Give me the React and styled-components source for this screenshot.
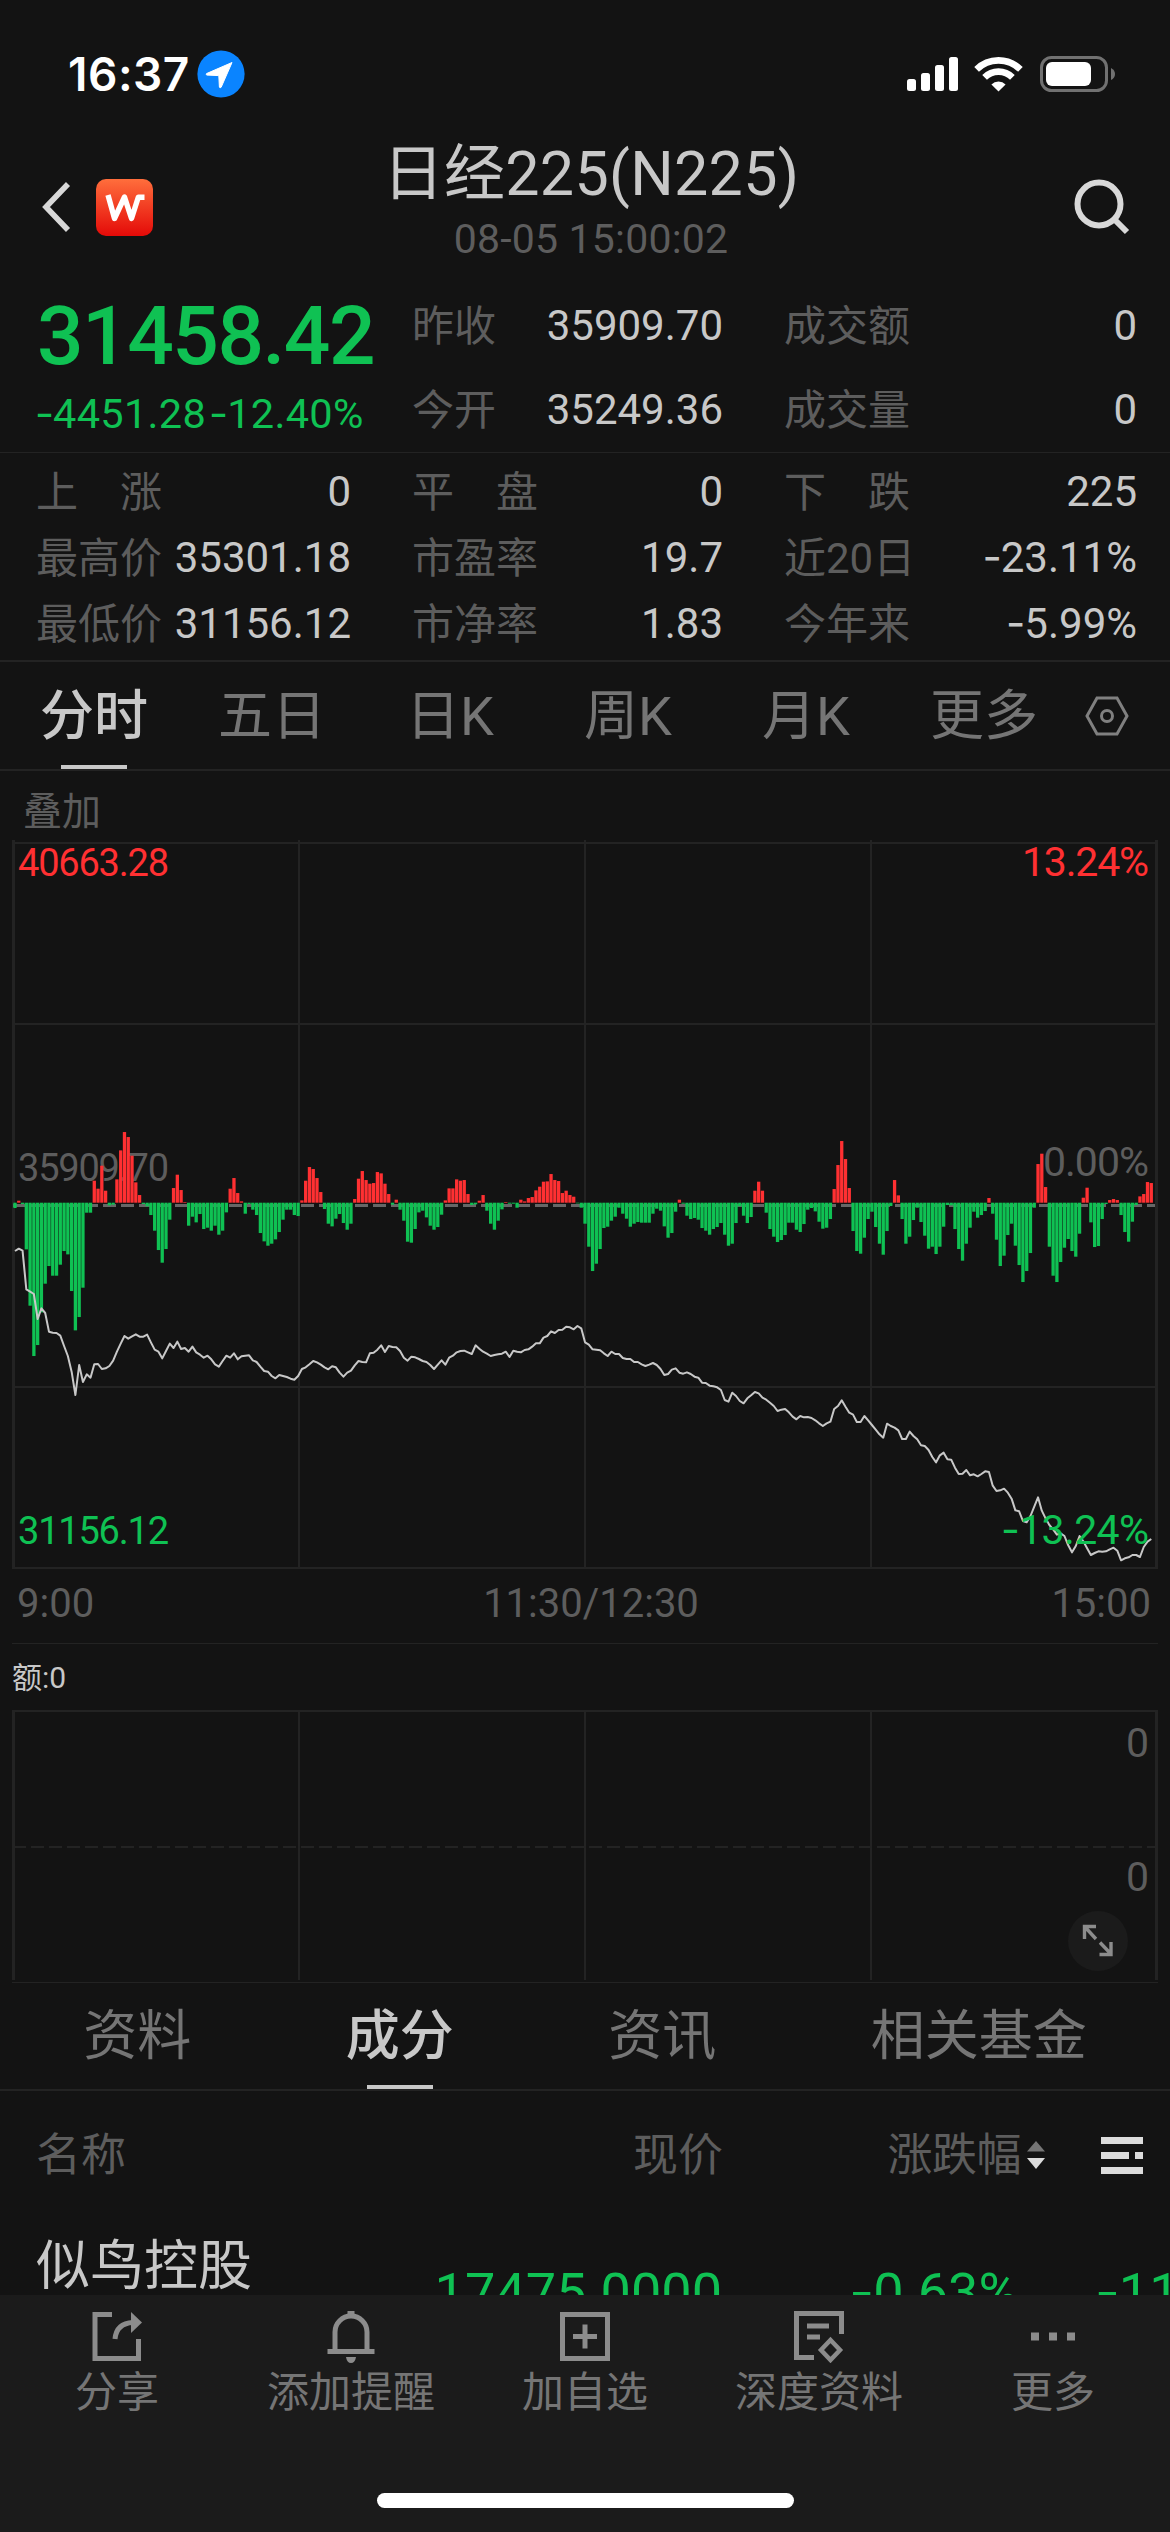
import React from 'react';
import styled, { createGlobalStyle } from 'styled-components';

const GlobalStyle = createGlobalStyle`
  body {
    margin: 0;
    background: #131313;
  }

  * {
    box-sizing: border-box;
  }

  svg {
    display: block;
  }
`;

const colors = {
  bg: '#131313',
  bar: '#1b1b1b',
  line: '#232323',
  text: '#c8c8c8',
  tab: '#757575',
  label: '#5d5d5d',
  up: '#ff3032',
  down: '#0fc153'
};

const fontStack = "Roboto, 'Noto Sans CJK SC', sans-serif";

const Screen = styled.div`
  width: 1170px;
  height: 2532px;
  display: flex;
  flex-direction: column;
  overflow: hidden;
  background: ${colors.bg};
  color: ${colors.text};
  font-family: ${fontStack};
  white-space: nowrap;
`;

// Inter has the wider minus
const Minus = styled.span`
  font-family: Inter, sans-serif;
  line-height: 1;
  letter-spacing: -1px;
`;

/* ---------- status bar ---------- */

const StatusBar = styled.div`
  flex: none;
  height: 140px;
  padding: 8px 55px 0 68px;
  display: flex;
  align-items: center;
  justify-content: space-between;
`;

const StatusGroup = styled.div`
  display: flex;
  align-items: center;
  gap: ${(props) => props.$gap}px;
`;

const Clock = styled.span`
  width: 121px;
  font-family: Inter, sans-serif;
  font-size: 46px;
  font-weight: 600;
  line-height: 56px;
  letter-spacing: 0.5px;
  color: #fff;
`;

/* ---------- header ---------- */

const Header = styled.div`
  flex: none;
  height: 134px;
  padding: 0 40px;
  display: grid;
  grid-template-columns: 200px 1fr 200px;
  align-items: center;
`;

const HeaderLeft = styled.div`
  display: flex;
  align-items: center;
  gap: 24px;
`;

const HeaderRight = styled.div`
  display: flex;
  justify-content: flex-end;
`;

const Heading = styled.div`
  align-self: start;
  padding: 1px 0 0 12px;
  display: flex;
  flex-direction: column;
  align-items: center;
  gap: 8px;
`;

const Title = styled.div`
  font-size: 61px;
  line-height: 66px;
  letter-spacing: 0.3px;
`;

const Timestamp = styled.div`
  font-size: 41px;
  line-height: 48px;
  letter-spacing: 0.2px;
  color: ${colors.label};
`;

/* ---------- quote ---------- */

const QuoteTop = styled.div`
  flex: none;
  height: 179px;
  padding: 9px 34px 0 36px;
  display: grid;
  grid-template-columns: 315px 311px 353px;
  column-gap: 61px;
  border-bottom: 1px solid ${colors.line};
`;

const PriceBlock = styled.div`
  padding-left: 1px;
  color: ${colors.down};
`;

const Price = styled.div`
  margin-top: 13px;
  font-size: 82px;
  font-weight: 500;
  line-height: 80px;
  letter-spacing: -1.5px;
`;

const Change = styled.div`
  margin: 17px 0 0 -2px;
  display: flex;
  gap: 3px;
  font-size: 41.5px;
  line-height: 40px;
  letter-spacing: 0.3px;
`;

const StatGrid = styled.div`
  flex: none;
  height: 209px;
  padding: 5px 34px 0 36px;
  display: grid;
  grid-template-columns: 315px 311px 353px;
  grid-auto-rows: 66px;
  column-gap: 61px;
  border-bottom: 2px solid ${colors.line};
`;

const Stat = styled.div`
  height: ${(props) => props.$height || 66}px;
  display: flex;
  align-items: center;
  justify-content: space-between;
  font-size: 42px;
`;

const StatLabel = styled.span`
  padding-bottom: 5px;
  color: ${colors.label};
`;

/* ---------- tabs ---------- */

const TabBar = styled.div`
  flex: none;
  height: ${(props) => props.$height}px;
  padding: ${(props) => props.$padding};
  display: flex;
  justify-content: ${(props) => (props.$spread ? 'space-around' : 'flex-start')};
  border-bottom: 2px solid ${colors.line};
`;

const Tab = styled.div`
  position: relative;
  width: ${(props) => (props.$width ? `${props.$width}px` : 'auto')};
  padding-bottom: 9px;
  display: flex;
  align-items: center;
  justify-content: center;
  font-size: 54px;
  font-weight: ${(props) => (props.$active ? 500 : 400)};
  color: ${(props) => (props.$active ? colors.text : colors.tab)};

  &::after {
    content: '';
    display: ${(props) => (props.$active ? 'block' : 'none')};
    position: absolute;
    left: 50%;
    bottom: 0;
    width: 66px;
    height: 4px;
    margin-left: -33px;
    background: ${colors.text};
  }
`;

const TabSettings = styled.div`
  padding-left: 12px;
  display: flex;
  align-items: center;
`;

/* ---------- charts ---------- */

const Overlay = styled.div`
  flex: none;
  height: 69px;
  padding: 5px 0 0 23px;
  display: flex;
  align-items: center;
  font-size: 39px;
  color: ${colors.label};
`;

const PriceChartSvg = styled.svg`
  flex: none;
  width: 1170px;
  height: 730px;
  font-family: ${fontStack};
`;

const TimeAxis = styled.div`
  flex: none;
  height: 74px;
  margin: 0 12px;
  padding: 0 7px 7px 5px;
  display: grid;
  grid-template-columns: 1fr auto 1fr;
  align-items: center;
  border-bottom: 1px solid ${colors.line};
  font-size: 40px;
  color: ${colors.label};
`;

const MiddayLabel = styled.span`
  padding-left: 14px;
`;

const CloseLabel = styled.span`
  justify-self: end;
`;

const VolumeTitle = styled.div`
  flex: none;
  height: 66px;
  padding: 0 0 4px 12px;
  display: flex;
  align-items: center;
  font-size: 30px;
`;

const VolumePane = styled.div`
  flex: none;
  position: relative;
  height: 273px;
`;

const VolumeSvg = styled.svg`
  width: 1170px;
  height: 273px;
  font-family: ${fontStack};
`;

const ExpandButton = styled.div`
  position: absolute;
  right: 42px;
  bottom: 12px;
  width: 60px;
  height: 60px;
  border-radius: 50%;
  background: ${colors.bar};
`;

/* ---------- constituents ---------- */

const List = styled.div`
  flex: 1;
  min-height: 0;
  overflow: hidden;
`;

const ListHeader = styled.div`
  height: 126px;
  padding: 0 27px 0 36px;
  display: grid;
  grid-template-columns: 300px 387px 298px 1fr;
  align-items: center;
  font-size: 45px;
  color: ${colors.label};
`;

const HeaderCell = styled.span`
  padding-bottom: 6px;
  justify-self: ${(props) => props.$align || 'start'};
`;

const ChangeHeader = styled.span`
  margin-right: -25px;
  padding-bottom: 6px;
  justify-self: end;
  display: flex;
  align-items: center;
  gap: 5px;
  letter-spacing: -0.5px;

  svg {
    margin-top: 7px;
  }
`;

const MenuCell = styled.span`
  padding-top: 4px;
  justify-self: end;
`;

const Row = styled.div`
  height: 150px;
  padding: 0 0 0 36px;
  display: grid;
  grid-template-columns: 300px 386px 296px 1fr;
  align-items: center;
`;

const Name = styled.span`
  margin-bottom: 61px;
  font-size: 54px;
`;

const Figure = styled.span`
  padding-left: ${(props) => props.$indent || 0}px;
  justify-self: ${(props) => props.$align || 'end'};
  font-size: 54px;
  color: ${colors.down};
`;

/* ---------- bottom bar ---------- */

const BottomBar = styled.div`
  flex: none;
  height: 237px;
  background: ${colors.bar};
  display: flex;
  flex-direction: column;
  justify-content: space-between;
  align-items: center;
`;

const Actions = styled.div`
  width: 100%;
  padding-top: 14px;
  display: grid;
  grid-template-columns: repeat(5, 1fr);
`;

const Action = styled.div`
  display: flex;
  flex-direction: column;
  align-items: center;
  gap: 5px;
  font-size: 42px;
  line-height: 50px;
  color: ${colors.tab};
`;

const HomeIndicator = styled.div`
  width: 417px;
  height: 15px;
  margin-bottom: 24px;
  border-radius: 8px;
  background: #fff;
`;

/* ---------- data ---------- */

// one entry per minute, thirds of a pixel above (+) or below (-) the zero line
const momentum = [
  -16, 6, -4, -140, -309, -460, -427, -329, -243, -190, -219, -219, -186, -145, -155, -265, -383, -343, -255, -30,
  -30, 66, 42, 111, 36, -8, -6, 70, 157, 212, 197, 141, 61, 23, -4, -11, -37, -84, -142, -180,
  -139, -51, 44, 84, 38, 2, -69, -42, -59, -34, -79, -75, -84, -69, -96, -84, -29, 42, 74, 29,
  4, -33, -4, -21, -37, -91, -116, -129, -123, -110, -88, -51, -21, -21, -37, -40, 7, 66, 107, 101,
  74, 32, -19, -63, -71, -48, -34, -61, -81, -63, 11, 72, 95, 68, 57, 59, 92, 88, 57, 26,
  -6, 9, -21, -54, -117, -120, -79, -29, -24, -44, -69, -81, -73, -36, 7, 43, 43, 70, 66, 68,
  26, -7, -5, 6, 23, -24, -63, -81, -54, -20, 2, -3, -3, -15, 9, 4, 14, 17, 37, 48,
  63, 64, 86, 68, 65, 29, 36, 23, 18, -2, -15, -63, -132, -205, -183, -139, -76, -72, -54, -42,
  -15, -33, -48, -72, -63, -58, -60, -60, -60, -33, -18, -24, -71, -105, -91, -27, 9, -3, -39, -49,
  -46, -51, -76, -84, -96, -79, -73, -61, -96, -129, -123, -61, -11, -39, -61, -43, 36, 63, 36, -30,
  -79, -102, -118, -112, -97, -60, -60, -81, -88, -64, -21, -16, -26, -57, -78, -75, -49, 41, 113, 185,
  131, 44, -85, -145, -153, -105, -49, -27, -73, -123, -156, -85, -10, 68, 22, -49, -123, -102, -52, -15,
  -58, -99, -138, -132, -154, -132, -72, -7, -8, -79, -139, -174, -123, -75, -27, -45, -37, -25, 14, -33,
  -111, -190, -159, -97, -63, -129, -187, -238, -205, -151, -15, 116, 147, 47, -132, -219, -238, -178, -135, -109,
  -145, -162, -93, 15, 45, -59, -133, -130, -49, -4, 8, 11, 8, -37, -88, -117, -57, -7, 19, 26,
  62, 59
];

// same minutes, thirds of a pixel below y = 260 of the chart
const prices = [
  453, 446, 452, 568, 575, 582, 657, 625, 639, 695, 698, 699, 707, 738, 768, 815, 885, 795, 846, 823,
  833, 793, 792, 807, 805, 798, 782, 755, 731, 708, 716, 709, 703, 710, 710, 704, 727, 749, 755, 775,
  753, 731, 744, 725, 747, 744, 755, 740, 757, 764, 773, 767, 778, 793, 800, 783, 767, 773, 760, 778,
  769, 767, 766, 781, 786, 800, 813, 815, 828, 835, 825, 828, 831, 836, 839, 828, 807, 802, 793, 783,
  787, 794, 802, 808, 799, 802, 818, 830, 818, 812, 796, 783, 786, 787, 760, 758, 749, 736, 756, 738,
  741, 742, 753, 773, 782, 770, 772, 777, 783, 786, 795, 807, 794, 781, 794, 773, 767, 757, 753, 752,
  757, 762, 736, 746, 755, 761, 768, 765, 763, 761, 755, 771, 752, 755, 757, 750, 748, 740, 730, 730,
  713, 708, 694, 699, 690, 689, 680, 682, 688, 678, 685, 727, 734, 748, 749, 751, 760, 768, 755, 762,
  762, 774, 777, 777, 786, 786, 793, 798, 794, 789, 795, 807, 825, 822, 809, 805, 818, 821, 817, 822,
  830, 833, 848, 849, 857, 859, 862, 870, 900, 905, 878, 888, 903, 910, 895, 886, 876, 880, 893, 899,
  908, 918, 933, 929, 927, 937, 950, 958, 948, 952, 951, 954, 961, 970, 978, 970, 965, 927, 918, 901,
  920, 938, 944, 966, 966, 948, 961, 975, 989, 1003, 1013, 971, 978, 983, 991, 1017, 1017, 995, 1008, 1018,
  1036, 1038, 1050, 1071, 1087, 1066, 1058, 1078, 1079, 1103, 1122, 1121, 1110, 1126, 1123, 1129, 1122, 1114, 1116, 1157,
  1173, 1171, 1166, 1178, 1196, 1231, 1234, 1263, 1267, 1248, 1220, 1192, 1232, 1255, 1275, 1288, 1304, 1300, 1308, 1336,
  1357, 1338, 1308, 1324, 1345, 1365, 1359, 1354, 1355, 1354, 1348, 1343, 1352, 1381, 1375, 1372, 1365, 1365, 1371, 1341,
  1325, 1317
];

const headStats = [
  [['昨收', '35909.70'], ['今开', '35249.36']],
  [['成交额', '0'], ['成交量', '0']]
];

const stats = [
  ['上\u3000涨', '0'],
  ['平\u3000盘', '0'],
  ['下\u3000跌', '225'],
  ['最高价', '35301.18'],
  ['市盈率', '19.7'],
  ['近20日', '-23.11%'],
  ['最低价', '31156.12'],
  ['市净率', '1.83'],
  ['今年来', '-5.99%']
];

const periods = ['分时', '五日', '日K', '周K', '月K', '更多'];
const sections = ['资料', '成分', '资讯', '相关基金'];

/* ---------- icons ---------- */

const LocationIcon = () => (
  <svg width="48" height="48" viewBox="0 0 48 48">
    <circle cx="24" cy="24" r="23.6" fill="#0a84ff" />
    <path d="M35 12.5 L9.5 23.6 Q8.6 24.8 10 25.1 L21.8 25.6 L22.4 37 Q23 38.6 24.2 37.2 Z" fill="#fff" stroke="#fff" strokeWidth="1" strokeLinejoin="round" />
  </svg>
);

const SignalIcon = () => (
  <svg width="51" height="36" viewBox="0 0 51 36">
    <rect x="0" y="23" width="9" height="12" rx="2.5" fill="#fff" />
    <rect x="14" y="17" width="9" height="18" rx="2.5" fill="#fff" />
    <rect x="28" y="9" width="9" height="26" rx="2.5" fill="#fff" />
    <rect x="42" y="1" width="9" height="34" rx="2.5" fill="#fff" />
  </svg>
);

const WifiIcon = () => (
  <svg width="49" height="36" viewBox="0 0 49 36" fill="none" stroke="#fff">
    <path d="M2.6 13.4 A31 31 0 0 1 46.4 13.4" strokeWidth="6.6" />
    <path d="M10.6 21.4 A19.6 19.6 0 0 1 38.4 21.4" strokeWidth="6.6" />
    <path d="M24.5 35.5 L17.4 28.4 A10 10 0 0 1 31.6 28.4 Z" fill="#fff" stroke="none" />
  </svg>
);

const BatteryIcon = () => (
  <svg width="76" height="36" viewBox="0 0 76 36">
    <rect x="2.5" y="1.5" width="65" height="33" rx="10" fill="none" stroke="#717171" strokeWidth="3" />
    <rect x="7" y="6" width="45" height="24" rx="6" fill="#fff" />
    <path d="M72 12 Q76 14 76 18 Q76 22 72 24 Z" fill="#717171" />
  </svg>
);

const BackIcon = () => (
  <svg width="32" height="56" viewBox="0 0 32 56">
    <path d="M28 5 L6 28 L28 51" fill="none" stroke="#d8d8d8" strokeWidth="5.6" />
  </svg>
);

const WLogo = () => (
  <svg width="57" height="57" viewBox="0 0 57 57">
    <defs>
      <linearGradient id="wLogo" x1="0" y1="0" x2="0" y2="1">
        <stop offset="0" stopColor="#ff6e3c" />
        <stop offset="1" stopColor="#e40a08" />
      </linearGradient>
    </defs>
    <rect width="57" height="57" rx="10" fill="url(#wLogo)" />
    <path d="M12 16 L18.5 39.5 L28.5 18 L35.5 39.5 L42.3 18.3 L48.5 18.3" fill="none" stroke="#fff" strokeWidth="5.4" strokeLinejoin="round" />
  </svg>
);

const SearchIcon = () => (
  <svg width="57" height="58" viewBox="0 0 57 58" fill="none" stroke="#d8d8d8" strokeWidth="6">
    <circle cx="26" cy="26" r="21.5" />
    <path d="M41 41 L54 54" />
  </svg>
);

const HexIcon = () => (
  <svg width="44" height="40" viewBox="0 0 44 40" fill="none" stroke="#808080" strokeWidth="3">
    <path d="M12 2 H32 L42 20 L32 38 H12 L2 20 Z" />
    <circle cx="22" cy="20" r="5.5" />
  </svg>
);

const ExpandIcon = () => (
  <svg width="60" height="60" viewBox="0 0 60 60" fill="none" stroke="#8c8c8c" strokeWidth="3.4">
    <path d="M28 15.5 H16.5 V28 M17 16 L28 28" />
    <path d="M43 31 V43.5 H31.5 M32 31.5 L43 43" />
  </svg>
);

const SortIcon = () => (
  <svg width="20" height="30" viewBox="0 0 20 30">
    <path d="M10 1 L19 11.5 H1 Z" fill="#757575" />
    <path d="M1 18 H19 L10 29 Z" fill="#dcdcdc" />
  </svg>
);

const MenuIcon = () => (
  <svg width="42" height="38" viewBox="0 0 42 38" fill="#dcdcdc">
    <rect width="42" height="7" />
    <rect y="15" width="28" height="7" />
    <rect x="34" y="15" width="8" height="7" />
    <rect y="30" width="42" height="7" />
  </svg>
);

const ShareIcon = () => (
  <svg width="54" height="54" viewBox="0 0 54 54" fill="none" stroke="#8c8c8c" strokeWidth="5">
    <path d="M22 5.5 H5 V49.5 H48.5 V30" />
    <path d="M25 30 C26 19 32 14 43 13.5" />
    <path d="M41 3 L52 13.5 L41 24 Z" fill="#8c8c8c" stroke="none" />
  </svg>
);

const BellIcon = () => (
  <svg width="54" height="54" viewBox="0 0 54 54" fill="none" stroke="#8c8c8c" strokeWidth="5">
    <path d="M11 42 V23 A16 16 0 0 1 43 23 V42" />
    <path d="M3.5 42.5 H50.5" />
    <path d="M27 2 V8" strokeWidth="7" />
    <path d="M22 48 H32 Q31 54 27 54 Q23 54 22 48 Z" fill="#8c8c8c" stroke="none" />
  </svg>
);

const AddIcon = () => (
  <svg width="54" height="54" viewBox="0 0 54 54" fill="none" stroke="#8c8c8c" strokeWidth="5">
    <rect x="4.5" y="5.5" width="45" height="44" />
    <path d="M15 27.5 H39 M27 15.5 V39.5" />
  </svg>
);

const ReportIcon = () => (
  <svg width="54" height="54" viewBox="0 0 54 54" fill="none" stroke="#8c8c8c" strokeWidth="5">
    <path d="M22 48.5 H4.5 V4.5 H49.5 V25" />
    <path d="M15 17 H37 M15 28 H28" />
    <path d="M38.5 31 L48 41 L38.5 51 L29 41 Z" strokeWidth="4.5" />
  </svg>
);

const DotsIcon = () => (
  <svg width="54" height="54" viewBox="0 0 54 54" fill="#8c8c8c">
    <rect x="5" y="23.5" width="8" height="8" />
    <rect x="23" y="23.5" width="8" height="8" />
    <rect x="41" y="23.5" width="8" height="8" />
  </svg>
);

const actions = [
  ['分享', ShareIcon],
  ['添加提醒', BellIcon],
  ['加自选', AddIcon],
  ['深度资料', ReportIcon],
  ['更多', DotsIcon]
];

/* ---------- shared ---------- */

const Signed = ({ value }) => {
  if (value[0] !== '-') {
    return <span>{value}</span>;
  }

  return (
    <span>
      <Minus>-</Minus>
      {value.slice(1)}
    </span>
  );
};

/* ---------- chart components ---------- */

const STEP = 3.775;
const ZERO = 362.7;
const minuteX = (i) => 15 + i * STEP;

const ChartLabel = ({ x, y, width, size, fill, children }) => (
  <text x={x} y={y} fontSize={size} fill={fill} textLength={width}>
    {children}
  </text>
);

const PriceChart = () => {
  const line = prices.map((p, i) => `${minuteX(i)},${260 + p / 3}`).join(' ');

  return (
    <PriceChartSvg viewBox="0 0 1170 730">
      <g fill={colors.line}>
        <rect x="12" y="2" width="1146" height="2" />
        <rect x="12" y="183" width="1146" height="2" />
        <rect x="12" y="546" width="1146" height="2" />
        <rect x="12" y="727" width="1146" height="2" />
        <rect x="12" y="0" width="3" height="728" />
        <rect x="298" y="0" width="2" height="728" />
        <rect x="584" y="0" width="2" height="728" />
        <rect x="870" y="0" width="2" height="728" />
        <rect x="1155" y="0" width="3" height="728" />
      </g>

      <ChartLabel x={18} y={340.5} width={151} size={38} fill={colors.label}>35909.70</ChartLabel>
      <ChartLabel x={1043} y={336} width={106} size={41} fill={colors.label}>0.00%</ChartLabel>
      <path d="M13 365.5 H1155" stroke="#666" strokeWidth="3" strokeDasharray="13 5" />

      {momentum.map((v, i) => (
        <rect
          key={i}
          x={minuteX(i) - 1.65}
          y={v > 0 ? ZERO - v / 3 : ZERO}
          width="3.3"
          height={Math.abs(v) / 3}
          fill={v > 0 ? colors.up : colors.down}
        />
      ))}

      <polyline points={line} fill="none" stroke="#c8c8c8" strokeWidth="2" strokeLinejoin="round" />

      <ChartLabel x={18} y={36} width={151} size={38} fill={colors.up}>40663.28</ChartLabel>
      <ChartLabel x={1022} y={36} width={127} size={41} fill={colors.up}>13.24%</ChartLabel>
      <ChartLabel x={18} y={704} width={151} size={38} fill={colors.down}>31156.12</ChartLabel>
      <ChartLabel x={1001} y={704} width={148} size={41} fill={colors.down}>
        <tspan fontFamily="Inter, sans-serif">-</tspan>13.24%
      </ChartLabel>
    </PriceChartSvg>
  );
};

const VolumeChart = () => (
  <VolumePane>
    <VolumeSvg viewBox="0 0 1170 273">
      <g fill={colors.line}>
        <rect x="12" y="0" width="1146" height="2" />
        <rect x="12" y="272" width="1146" height="1" />
        <rect x="12" y="0" width="3" height="270" />
        <rect x="298" y="0" width="2" height="270" />
        <rect x="584" y="0" width="2" height="270" />
        <rect x="870" y="0" width="2" height="270" />
        <rect x="1155" y="0" width="3" height="270" />
      </g>
      <path d="M13 137 H1157" stroke={colors.line} strokeWidth="2" strokeDasharray="13 5" />
      <ChartLabel x={1126} y={47} size={41} fill={colors.label}>0</ChartLabel>
      <ChartLabel x={1126} y={181} size={41} fill={colors.label}>0</ChartLabel>
    </VolumeSvg>
    <ExpandButton>
      <ExpandIcon />
    </ExpandButton>
  </VolumePane>
);

const App = () => (
  <Screen>
    <GlobalStyle />

    <StatusBar>
      <StatusGroup $gap={8}>
        <Clock>16:37</Clock>
        <LocationIcon />
      </StatusGroup>
      <StatusGroup $gap={16}>
        <SignalIcon />
        <WifiIcon />
        <BatteryIcon />
      </StatusGroup>
    </StatusBar>

    <Header>
      <HeaderLeft>
        <BackIcon />
        <WLogo />
      </HeaderLeft>
      <Heading>
        <Title>日经225(N225)</Title>
        <Timestamp>08-05 15:00:02</Timestamp>
      </Heading>
      <HeaderRight>
        <SearchIcon />
      </HeaderRight>
    </Header>

    <QuoteTop>
      <PriceBlock>
        <Price>31458.42</Price>
        <Change>
          <Signed value="-4451.28" />
          <Signed value="-12.40%" />
        </Change>
      </PriceBlock>
      {headStats.map((column, i) => (
        <div key={i}>
          {column.map(([label, value]) => (
            <Stat key={label} $height={84}>
              <StatLabel>{label}</StatLabel>
              <Signed value={value} />
            </Stat>
          ))}
        </div>
      ))}
    </QuoteTop>

    <StatGrid>
      {stats.map(([label, value]) => (
        <Stat key={label}>
          <StatLabel>{label}</StatLabel>
          <Signed value={value} />
        </Stat>
      ))}
    </StatGrid>

    <TabBar $height={109} $padding="0 0 0 5px">
      {periods.map((period, i) => (
        <Tab key={period} $width={178} $active={i === 0}>{period}</Tab>
      ))}
      <TabSettings>
        <HexIcon />
      </TabSettings>
    </TabBar>

    <Overlay>叠加</Overlay>
    <PriceChart />
    <TimeAxis>
      <span>9:00</span>
      <MiddayLabel>11:30/12:30</MiddayLabel>
      <CloseLabel>15:00</CloseLabel>
    </TimeAxis>

    <VolumeTitle>额:0</VolumeTitle>
    <VolumeChart />

    <TabBar $height={108} $padding="0 6px" $spread>
      {sections.map((section, i) => (
        <Tab key={section} $active={i === 1}>{section}</Tab>
      ))}
    </TabBar>

    <List>
      <ListHeader>
        <HeaderCell>名称</HeaderCell>
        <HeaderCell $align="end">现价</HeaderCell>
        <ChangeHeader>
          涨跌幅
          <SortIcon />
        </ChangeHeader>
        <MenuCell>
          <MenuIcon />
        </MenuCell>
      </ListHeader>
      <Row>
        <Name>似鸟控股</Name>
        <Figure>17475.0000</Figure>
        <Figure><Signed value="-0.63%" /></Figure>
        <Figure $align="start" $indent={77}><Signed value="-11" /></Figure>
      </Row>
    </List>

    <BottomBar>
      <Actions>
        {actions.map(([label, Icon]) => (
          <Action key={label}>
            <Icon />
            {label}
          </Action>
        ))}
      </Actions>
      <HomeIndicator />
    </BottomBar>
  </Screen>
);

export default App;
